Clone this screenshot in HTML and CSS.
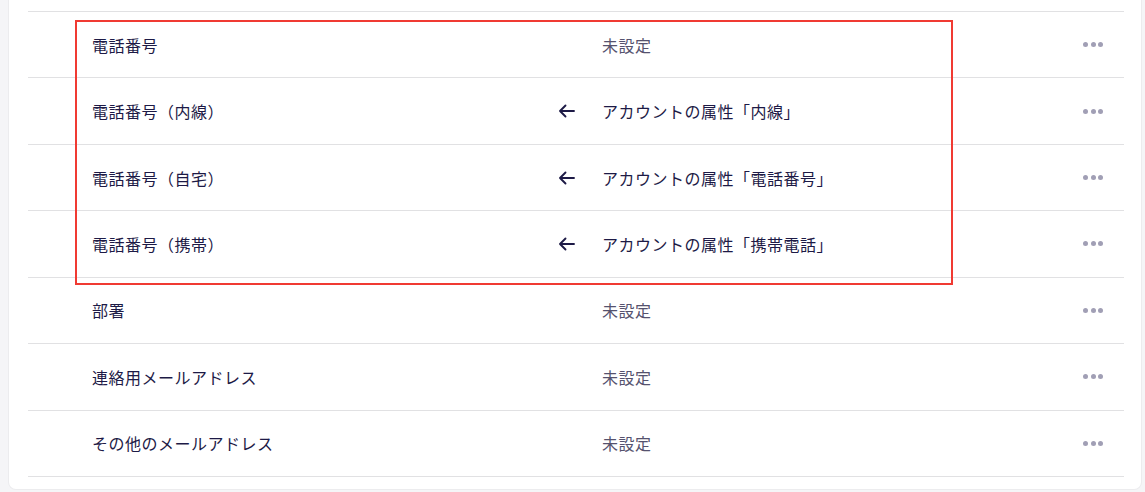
FILE: index.html
```html
<!DOCTYPE html>
<html lang="ja">
<head>
<meta charset="utf-8">
<link rel="stylesheet" href="styles.css">
</head>
<body>
<div class="card">
  <div class="list">
    <div class="row"><span class="label">電話番号</span><span class="arrow"></span><span class="value muted">未設定</span><span class="more"><i></i><i></i><i></i></span></div>
    <div class="row"><span class="label">電話番号（内線）</span><span class="arrow"><svg width="17" height="14" viewBox="0 0 17 14"><path d="M16 7H2M7.5 1.5L2 7l5.5 5.5" fill="none" stroke="#1d1a46" stroke-width="1.9" stroke-linecap="round" stroke-linejoin="round"/></svg></span><span class="value">アカウントの属性「内線」</span><span class="more"><i></i><i></i><i></i></span></div>
    <div class="row"><span class="label">電話番号（自宅）</span><span class="arrow"><svg width="17" height="14" viewBox="0 0 17 14"><path d="M16 7H2M7.5 1.5L2 7l5.5 5.5" fill="none" stroke="#1d1a46" stroke-width="1.9" stroke-linecap="round" stroke-linejoin="round"/></svg></span><span class="value">アカウントの属性「電話番号」</span><span class="more"><i></i><i></i><i></i></span></div>
    <div class="row"><span class="label">電話番号（携帯）</span><span class="arrow"><svg width="17" height="14" viewBox="0 0 17 14"><path d="M16 7H2M7.5 1.5L2 7l5.5 5.5" fill="none" stroke="#1d1a46" stroke-width="1.9" stroke-linecap="round" stroke-linejoin="round"/></svg></span><span class="value">アカウントの属性「携帯電話」</span><span class="more"><i></i><i></i><i></i></span></div>
    <div class="row"><span class="label">部署</span><span class="arrow"></span><span class="value muted">未設定</span><span class="more"><i></i><i></i><i></i></span></div>
    <div class="row"><span class="label">連絡用メールアドレス</span><span class="arrow"></span><span class="value muted">未設定</span><span class="more"><i></i><i></i><i></i></span></div>
    <div class="row"><span class="label">その他のメールアドレス</span><span class="arrow"></span><span class="value muted">未設定</span><span class="more"><i></i><i></i><i></i></span></div>
  </div>
  <div class="highlight"></div>
</div>
</body>
</html>
```

FILE: styles.css
```css
html, body {
  margin: 0;
  padding: 0;
  background: #f5f5f7;
  width: 1145px;
  height: 492px;
  overflow: hidden;
}
body {
  font-family: "Noto Sans CJK JP", "Noto Sans", sans-serif;
  color: #1d1a46;
}
.card {
  position: relative;
  margin-left: 9px;
  width: 1132px;
  height: 489px;
  background: #ffffff;
  border-radius: 0 0 7px 7px;
  box-shadow: 0 0 0 1px #ececee;
  box-sizing: border-box;
  padding: 11px 17px 0 19px;
}
.list {
  border-top: 1px solid #e1e1e3;
}
.row {
  height: 66.43px;
  box-sizing: border-box;
  border-bottom: 1px solid #e1e1e3;
  display: grid;
  grid-template-columns: 466px 44px 1fr auto;
  align-items: center;
  padding: 0 21px 0 64px;
}
.label, .value {
  font-size: 16px;
  letter-spacing: 0.5px;
  line-height: 20px;
}
.value.muted {
  color: #55526e;
}
.arrow {
  display: flex;
  align-items: center;
}
.arrow svg {
  display: block;
}
.more {
  display: flex;
  gap: 2.5px;
}
.more i {
  display: block;
  width: 5px;
  height: 5px;
  border-radius: 50%;
  background: #a19fb5;
}
.highlight {
  position: absolute;
  left: 66px;
  top: 20px;
  width: 878px;
  height: 265px;
  box-sizing: border-box;
  border: 2px solid #f03a32;
  pointer-events: none;
}
```
